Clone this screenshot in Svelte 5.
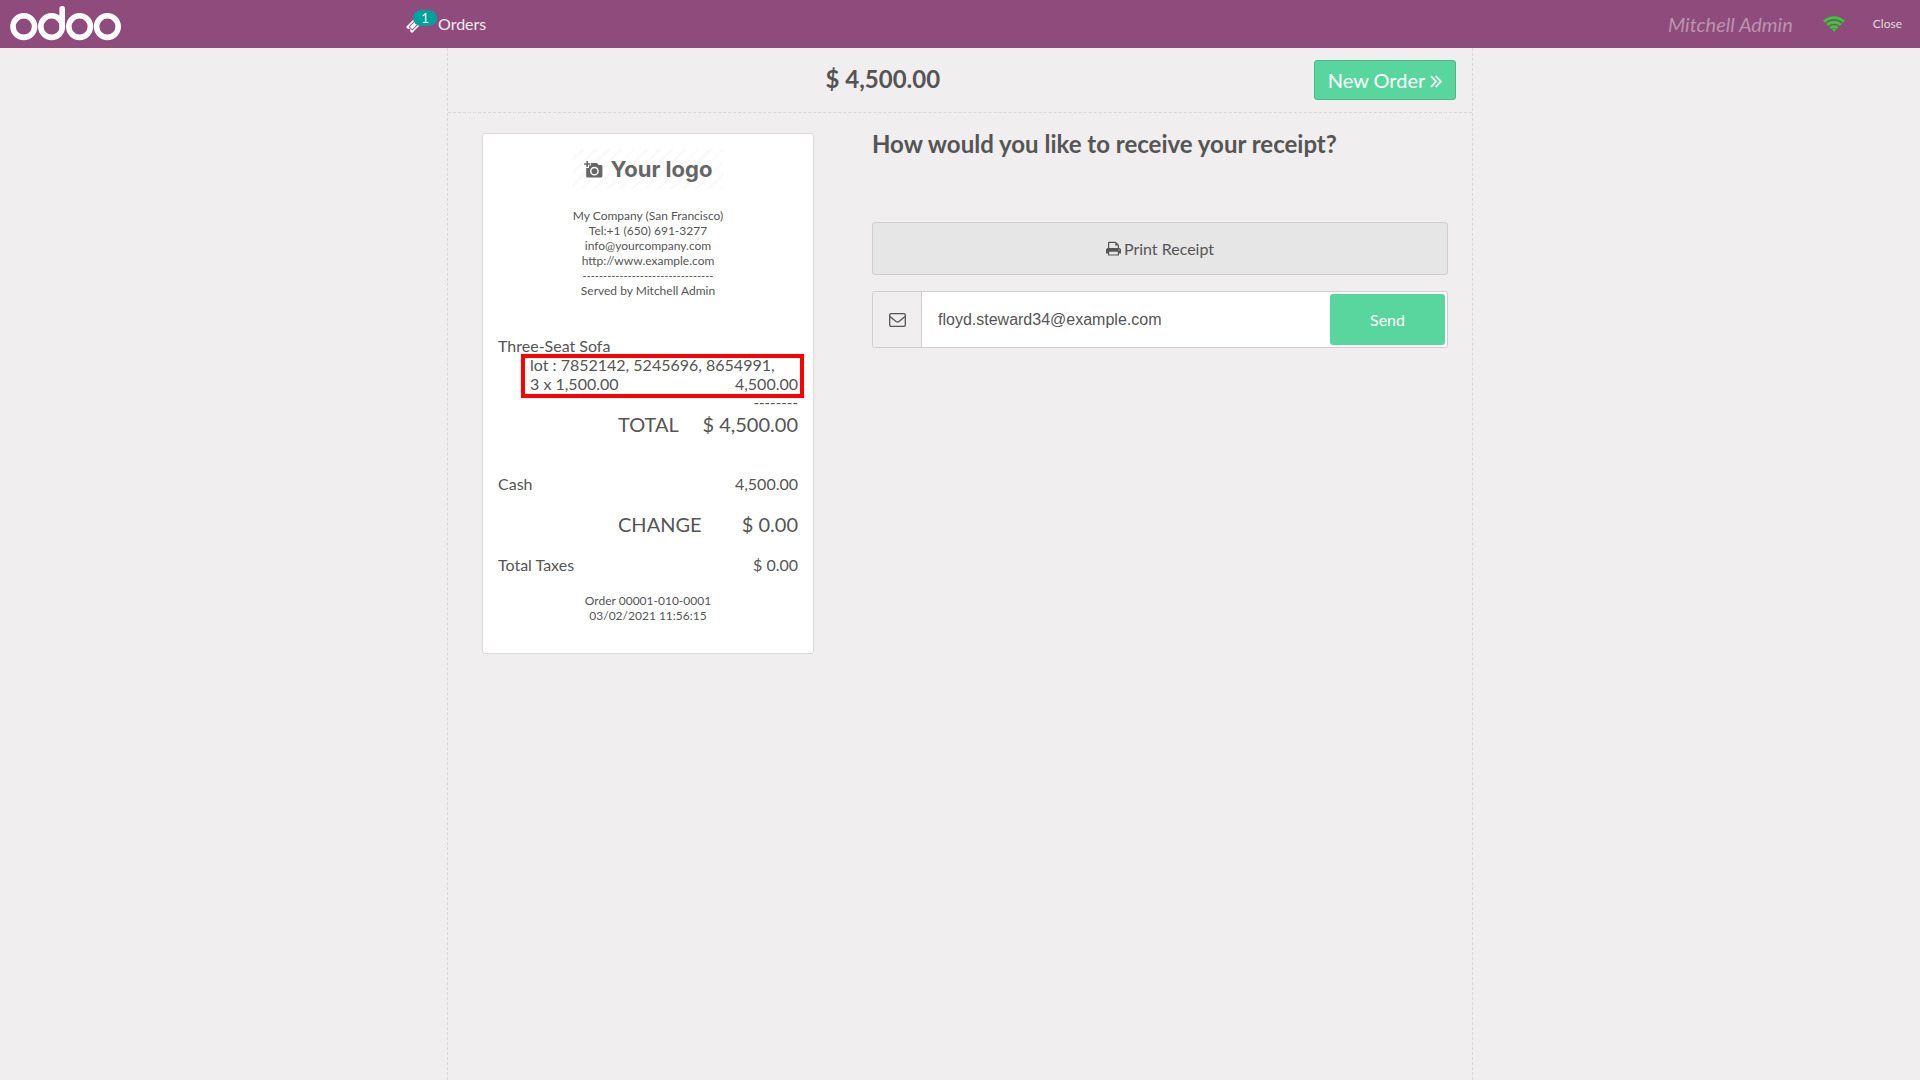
<script>
  let email = $state('floyd.steward34@example.com');

  const company = [
    'My Company (San Francisco)',
    'Tel:+1 (650) 691-3277',
    'info@yourcompany.com',
    'http://www.example.com',
  ];
</script>

<svelte:head><title>Point of Sale</title></svelte:head>

<div class="pos">
  <header>
    <div class="brand">
      <svg class="logo" viewBox="0 0 112 36" role="img" aria-label="odoo">
        <g fill="none" stroke="#fff" stroke-width="5.6">
          <circle cx="13.8" cy="20.6" r="10.8" />
          <circle cx="41.6" cy="20.6" r="10.8" />
          <circle cx="69.6" cy="20.6" r="10.8" />
          <circle cx="97.4" cy="20.6" r="10.8" />
          <path d="M52.2 20.6V2.8" stroke-linecap="round" />
        </g>
      </svg>
    </div>
    <button class="orders">
      <span class="ticket">
        <svg viewBox="0 0 16 16" aria-hidden="true">
          <path
            fill="#fff"
            fill-rule="evenodd"
            d="M10 0 12 2a1.400 1.400 0 0 0 2 2L16 6 6 16 4 14a1.400 1.400 0 0 0-2-2L0 10zM9.700 2.600 2.600 9.700 6.300 13.400 13.400 6.300zM9.700 3.800 12.200 6.300 6.300 12.200 3.800 9.700z"
          />
        </svg>
        <span class="badge">1</span>
      </span>
      <span>Orders</span>
    </button>
    <span class="user">Mitchell Admin</span>
    <svg class="wifi" viewBox="0 0 22 16" role="img" aria-label="Connected">
      <g fill="none" stroke="#3c3" stroke-width="2.9">
        <path d="M1.100 5.700a14 14 0 0 1 19.800 0" />
        <path d="M4.300 9a9.500 9.500 0 0 1 13.400 0" />
        <path d="M7.500 12.100a5 5 0 0 1 7 0" />
      </g>
      <path fill="#3c3" d="M11 12.400a2.700 2.700 0 0 1 2 .9L11 16 9 13.300a2.700 2.700 0 0 1 2-.9z" />
    </svg>
    <button class="close">Close</button>
  </header>

  <main>
    <div class="top">
      <h1>$ 4,500.00</h1>
      <button class="next">
        New Order
        <svg viewBox="0 0 12 13" aria-hidden="true">
          <path d="M1 1.200l5 5.300-5 5.300M5.800 1.200l5 5.300-5 5.300" fill="none" stroke="#fff" stroke-width="1.800" />
        </svg>
      </button>
    </div>

    <div class="body">
      <div class="left">
        <article class="receipt">
          <div class="yourlogo">
            <svg viewBox="0 0 19 17" aria-hidden="true">
              <path
                fill="#666"
                fill-rule="evenodd"
                d="M7 2h6l1.600 2H17a1.400 1.400 0 0 1 1.400 1.400v9.800a1.400 1.400 0 0 1-1.400 1.400H3.600a1.400 1.400 0 0 1-1.400-1.400V7H5V4.400h2zM10.400 5.800a4.400 4.400 0 1 0 0 8.800 4.400 4.400 0 0 0 0-8.800zM10.400 7.300a2.900 2.900 0 1 1 0 5.800 2.900 2.900 0 0 1 0-5.800z"
              />
              <path d="M3.200 0v6M.2 3h6" stroke="#666" stroke-width="1.500" />
            </svg>
            <span>Your logo</span>
          </div>
          <div class="contact">
            {#each company as line}
              <div>{line}</div>
            {/each}
            <div class="divider">--------------------------------</div>
            <div>Served by Mitchell Admin</div>
          </div>
          <div class="lines">
            <div>Three-Seat Sofa</div>
            <div class="detail">
              <div>lot : 7852142, 5245696, 8654991,</div>
              <div class="pair"><span>3 x 1,500.00</span><span>4,500.00</span></div>
            </div>
            <div class="rule">--------</div>
          </div>
          <div class="pair big"><span>TOTAL</span><span>$ 4,500.00</span></div>
          <div class="pair cash"><span>Cash</span><span>4,500.00</span></div>
          <div class="pair big"><span>CHANGE</span><span>$ 0.00</span></div>
          <div class="pair taxes"><span>Total Taxes</span><span>$ 0.00</span></div>
          <div class="order">
            <div>Order 00001-010-0001</div>
            <div>03/02/2021 11:56:15</div>
          </div>
        </article>
      </div>

      <section class="actions">
        <h2>How would you like to receive your receipt?</h2>
        <button class="print">
          <svg viewBox="0 0 15 15" aria-hidden="true">
            <path
              fill="#555"
              fill-rule="evenodd"
              d="M2 7V1.500Q2 .7 2.800.7H9.800L13 3.900V7Q15 7.200 15 9v3.500H13V14q0 .6-.8.6H2.800Q2 14.600 2 14v-1.500H0V9Q0 7.200 2 7zM3.200 7h8.600V4.600H9.300V1.900H3.200zM3.200 10.800v2.600h8.600v-2.600zM13 8.400a.6.6 0 1 0 .01 0z"
            />
          </svg>
          Print Receipt
        </button>
        <form class="email" onsubmit={(e) => e.preventDefault()}>
          <label for="email" aria-label="Email address">
            <svg viewBox="0 0 17 16" aria-hidden="true">
              <g fill="none" stroke="#555" stroke-width="1.300">
                <rect x=".7" y="1.700" width="15.600" height="12.600" rx="1.200" />
                <path d="M1 4.400l6 5q1.500 1.100 3 0l6-5" />
              </g>
            </svg>
          </label>
          <input id="email" type="email" bind:value={email} />
          <button class="send">Send</button>
        </form>
      </section>
    </div>
  </main>
</div>

<style>
  :global(body) {
    margin: 0;
    background: #f0eeee;
  }
  .pos {
    min-height: 100vh;
    display: flex;
    flex-direction: column;
    font-family: Lato, sans-serif;
    font-size: 16px;
    line-height: 19px;
    color: #555;
  }
  button {
    font: inherit;
    color: inherit;
    border: 0;
    background: none;
    padding: 0;
    cursor: pointer;
  }
  h1,
  h2 {
    margin: 0;
    font-size: 24px;
    line-height: 30px;
    font-weight: 700;
  }
  header {
    display: flex;
    align-items: center;
    height: 48px;
    background: #8e4b7b;
    color: #fff;
  }
  .brand {
    width: 396px;
    padding-left: 10px;
    box-sizing: border-box;
  }
  .logo {
    display: block;
    width: 112px;
    height: 36px;
  }
  .orders {
    display: flex;
    align-items: center;
    margin-right: auto;
    padding: 0 0 2px 10px;
    color: #eee;
  }
  .ticket {
    position: relative;
    width: 32px;
    height: 16px;
    margin-top: 4px;
  }
  .ticket svg {
    display: block;
    width: 16px;
    height: 16px;
  }
  .badge {
    position: absolute;
    left: 7px;
    top: -7px;
    width: 24px;
    height: 16px;
    border-radius: 8px;
    background: #00a09d;
    font-size: 14px;
    line-height: 16px;
    text-align: center;
  }
  .user {
    font-size: 20px;
    line-height: 24px;
    font-style: italic;
    color: #bb93b0;
  }
  .wifi {
    width: 22px;
    height: 16px;
    margin: 0 28px 0 30px;
  }
  .close {
    padding-bottom: 2px;
    margin-right: 18px;
    font-size: 12px;
    color: #ddd;
  }
  main {
    flex: 1;
    width: 100%;
    max-width: 1026px;
    box-sizing: border-box;
    margin: 0 auto;
    border: 1px dashed #d8d6d6;
    border-width: 0 1px;
  }
  .top {
    display: flex;
    align-items: center;
    height: 64px;
    padding-right: 16px;
    border-bottom: 1px dashed #d8d6d6;
  }
  .top h1 {
    flex: 1;
    padding: 0 0 2px 4px;
    text-align: center;
  }
  .next {
    height: 40px;
    padding: 0 13px;
    border: 1px solid #4cb98a;
    border-radius: 3px;
    background: #58d69d;
    color: #fff;
    font-size: 20px;
  }
  .next svg {
    width: 12px;
    height: 13px;
  }
  .body {
    display: grid;
    grid-template-columns: 400fr 624fr;
  }
  .left {
    padding-top: 20px;
  }
  .receipt {
    width: 300px;
    margin: 0 auto;
    padding: 15px 15px 30px;
    border: 1px solid #dcdada;
    border-radius: 3px;
    background: #fff;
  }
  .yourlogo {
    display: flex;
    align-items: center;
    justify-content: center;
    gap: 8px;
    width: 150px;
    height: 40px;
    margin: 0 auto 19px;
    background: repeating-linear-gradient(135deg, #fff 0 6px, #fafafa 6px 9px);
    color: #666;
    font-family: Inter, sans-serif;
    font-size: 22px;
    font-weight: 700;
  }
  .yourlogo svg {
    width: 19px;
    height: 17px;
  }
  .contact,
  .order {
    font-size: 12px;
    line-height: 15px;
    text-align: center;
  }
  .divider {
    font-size: 11px;
  }
  .lines {
    padding-top: 38px;
  }
  .detail {
    position: relative;
    margin-left: 32px;
    white-space: nowrap;
  }
  .detail::after {
    content: '';
    position: absolute;
    inset: -1px -6px -5px -9px;
    border: 4px solid #f00;
  }
  .pair {
    display: flex;
    justify-content: space-between;
  }
  .rule {
    font-size: 15px;
    text-align: right;
  }
  .big {
    padding-left: 120px;
    font-size: 20px;
    line-height: 24px;
  }
  .cash {
    padding: 38px 0 19px;
  }
  .taxes {
    padding: 19px 0;
  }
  .actions {
    padding: 16px 24px 0;
  }
  .print {
    display: flex;
    align-items: center;
    justify-content: center;
    gap: 3px;
    width: 100%;
    height: 53px;
    margin: 63px 0 16px;
    border: 1px solid #d0cece;
    border-radius: 3px;
    background: #e6e6e6;
  }
  .print svg {
    width: 15px;
    height: 15px;
  }
  .email {
    display: flex;
    height: 57px;
    box-sizing: border-box;
    border: 1px solid #d0cece;
    border-radius: 3px;
    background: #fff;
    overflow: hidden;
  }
  .email label {
    display: flex;
    align-items: center;
    justify-content: center;
    width: 48px;
    border-right: 1px solid #d0cece;
    background: #f0eeee;
  }
  .email svg {
    width: 17px;
    height: 16px;
  }
  .email input {
    flex: 1;
    min-width: 0;
    padding: 0 16px;
    border: 0;
    outline: 0;
    background: none;
    color: #555;
    font: 16px 'Liberation Sans', sans-serif;
  }
  .send {
    width: 115px;
    margin: 2px;
    border-radius: 3px;
    background: #58d69d;
    color: #fff;
  }
</style>
